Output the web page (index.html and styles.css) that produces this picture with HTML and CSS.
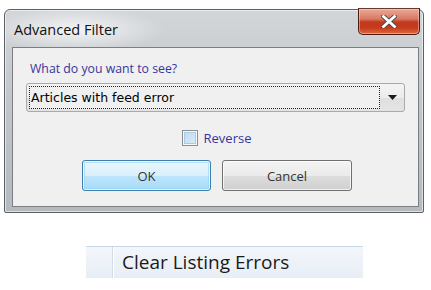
FILE: index.html
```html
<!DOCTYPE html>
<html lang="en">
<head>
<meta charset="utf-8">
<title>Advanced Filter</title>
<link rel="stylesheet" href="styles.css">
</head>
<body>
<div class="window">
  <div class="titlebar">
    <span class="title">Advanced Filter</span>
    <div class="close" aria-label="Close">
      <svg width="16" height="13" viewBox="0 0 16 13">
        <path d="M2.5 1.5 L13.5 11.5 M13.5 1.5 L2.5 11.5" stroke="#4a4a4a" stroke-width="4.6" stroke-linecap="square" fill="none"/>
        <path d="M2.5 1.5 L13.5 11.5 M13.5 1.5 L2.5 11.5" stroke="#ffffff" stroke-width="2.8" stroke-linecap="square" fill="none"/>
      </svg>
    </div>
  </div>
  <div class="client">
    <div class="prompt">What do you want to see?</div>
    <div class="combo">
      <div class="combo-value">Articles with feed error</div>
      <div class="combo-arrow">
        <svg width="9" height="5" viewBox="0 0 9 5"><path d="M0 0 H9 L4.5 5 Z" fill="#1a1a1a"/></svg>
      </div>
    </div>
    <div class="check-row">
      <span class="checkbox"></span>
      <span class="check-label">Reverse</span>
    </div>
    <div class="buttons">
      <button class="btn btn-default">OK</button>
      <button class="btn">Cancel</button>
    </div>
  </div>
</div>
<div class="menu-item">
  <span class="gutter"></span>
  <span class="menu-label">Clear Listing Errors</span>
</div>
</body>
</html>
```
FILE: styles.css
```css
html, body {
  margin: 0;
  padding: 0;
  background: #ffffff;
}
body {
  width: 431px;
  height: 290px;
  overflow: hidden;
  font-family: "Open Sans", "Noto Sans", sans-serif;
}
.window {
  margin: 9px 0 0 4px;
  width: 420px;
  height: 204px;
  box-sizing: border-box;
  border: 1px solid #5c6166;
  border-radius: 6px 6px 2px 2px;
  background:
    radial-gradient(ellipse 90px 22px at 70px 20px, rgba(255,255,255,0.75), rgba(255,255,255,0) 100%),
    linear-gradient(#d3d6d9 0%, #c3c7cb 40%, #b5babe 100%);
  box-shadow: inset 0 0 0 1px rgba(255,255,255,0.55);
  display: flex;
  flex-direction: column;
}
.titlebar {
  height: 37px;
  display: flex;
  align-items: flex-start;
  justify-content: space-between;
  padding-left: 9px;
}
.title {
  margin-top: 11px;
  font-size: 14.5px;
  line-height: 18px;
  color: #111111;
}
.close {
  margin-top: -2px;
  margin-right: 3px;
  width: 62px;
  height: 27px;
  box-sizing: border-box;
  border: 1px solid #4d1c12;
  border-top-color: #6a3a30;
  border-radius: 0 0 5px 5px;
  background: linear-gradient(#eaa997 0%, #d77a63 40%, #c2391d 52%, #c53b1c 75%, #e0683f 100%);
  box-shadow: inset 0 0 0 1px rgba(255,220,210,0.45);
  display: flex;
  align-items: center;
  justify-content: center;
}
.client {
  margin: 0 4px 5px 7px;
  flex: 1;
  box-sizing: border-box;
  border: 1px solid #7b7f83;
  background: #f0f0f0;
  padding: 13px 13px 0 13px;
  display: flex;
  flex-direction: column;
  align-items: flex-start;
}
.prompt {
  margin-left: 4px;
  font-size: 12.3px;
  line-height: 16px;
  color: #36369c;
}
.combo {
  margin-top: 6px;
  width: 379px;
  height: 29px;
  box-sizing: border-box;
  border: 1px solid #a9a9a9;
  border-radius: 3px;
  background: linear-gradient(#f4f4f4 0%, #ececec 50%, #dfdfdf 51%, #e4e4e4 100%);
  display: flex;
  align-items: stretch;
  padding: 2px 0 2px 2px;
}
.combo-value {
  flex: 1;
  border: 1px dotted #222222;
  font-family: "DejaVu Sans", "Liberation Sans", sans-serif;
  font-size: 12.5px;
  line-height: 21px;
  color: #000000;
  padding-left: 1px;
  background: #f0f0f0;
}
.combo-arrow {
  width: 24px;
  display: flex;
  align-items: center;
  justify-content: center;
}
.check-row {
  align-self: center;
  margin-left: 2px;
  margin-top: 18px;
  height: 16px;
  display: flex;
  align-items: center;
  gap: 6px;
}
.checkbox {
  width: 16px;
  height: 16px;
  box-sizing: border-box;
  border: 1px solid #8a8f94;
  background: linear-gradient(135deg, #bcd9ee 0%, #dcedf9 100%);
  box-shadow: inset 0 0 0 1px #f4f9fd, inset 0 0 0 2px #a9cce6;
}
.check-label {
  font-size: 13px;
  line-height: 16px;
  color: #36369c;
}
.buttons {
  align-self: center;
  margin-left: 3px;
  margin-top: 14px;
  display: flex;
  gap: 11px;
}
.btn {
  width: 130px;
  height: 31px;
  box-sizing: border-box;
  border: 1px solid #707070;
  border-radius: 3px;
  background: linear-gradient(#f3f3f3 0%, #ebebeb 50%, #dddddd 51%, #cfcfcf 100%);
  box-shadow: inset 0 0 0 1px rgba(255,255,255,0.7);
  font-family: "Open Sans", "Noto Sans", sans-serif;
  font-size: 13px;
  color: #333333;
  padding: 0;
}
.btn-default {
  width: 129px;
  border-color: #3c7fb1;
  background: linear-gradient(#eaf6fd 0%, #d9f0fc 50%, #bee6fd 51%, #a7d9f5 100%);
  box-shadow: inset 0 0 0 1px rgba(255,255,255,0.75), inset 0 0 0 2px rgba(150,210,240,0.6);
}
.menu-item {
  margin: 33px 0 0 86px;
  width: 277px;
  height: 32px;
  box-sizing: border-box;
  border-top: 1px solid #c9d6e6;
  background: linear-gradient(#f3f6fa 0%, #e8eef6 100%);
  display: flex;
  align-items: stretch;
}
.gutter {
  width: 26px;
  border-right: 1px solid #d3dbe5;
  box-shadow: 1px 0 0 #ffffff;
}
.menu-label {
  padding-left: 9px;
  font-size: 19px;
  line-height: 30px;
  color: #1a1a1a;
}
```
